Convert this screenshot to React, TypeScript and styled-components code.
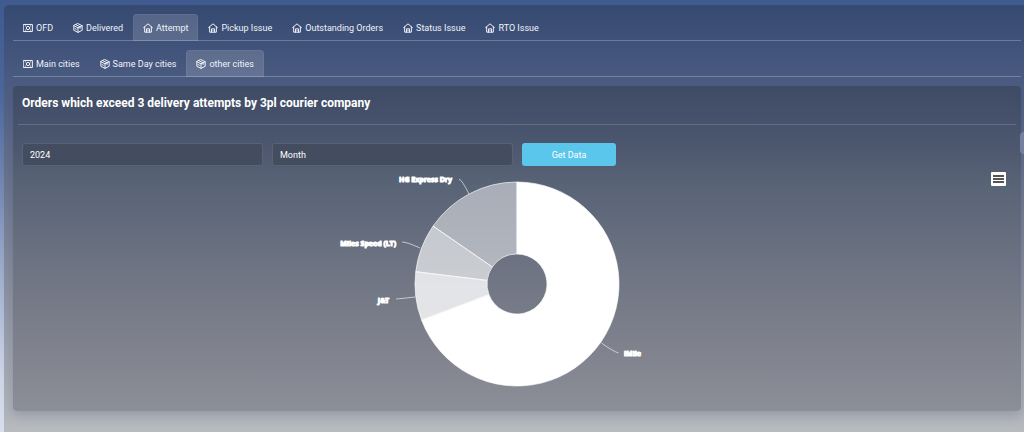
import React, { useState } from 'react';
import styled, { createGlobalStyle } from 'styled-components';

const GlobalStyle = createGlobalStyle`
  * { box-sizing: border-box; }
  html, body { margin: 0; }
  body {
    font-family: Roboto, "Liberation Sans", sans-serif;
    color: #fff;
    overflow-x: hidden;
  }
`;

const Page = styled.div`
  min-height: 100vh;
  display: flex;
  padding: 5px 0 0 4px;
  background: linear-gradient(180deg, #3f5a8f 0%, #4a659a 20%, #7186b1 42%, #a2b1d0 65%, #cfd7e8 88%, #d8deeb 100%);
`;

const Shell = styled.main`
  position: relative;
  flex: 1;
  min-width: 0;
  padding: 9px 3px 21px 9px;
  border-radius: 5px 0 0 0;
  background: linear-gradient(180deg, #364971 0%, #43557c 12%, #4e5e83 20%, #68738e 40%, #868d9f 62%, #a0a5b0 82%, #b0b4bb 95%, #b8bbbe 100%);
`;

const TabBar = styled.div`
  display: flex;
  height: 27px;
  margin-bottom: 9px;
  border-bottom: 1px solid rgba(255, 255, 255, 0.24);
`;

const Tab = styled.button<{ $active: boolean }>`
  display: flex;
  align-items: center;
  gap: 3px;
  height: 27px;
  padding: 0 9px;
  border: 1px solid ${(p) => (p.$active ? 'rgba(255, 255, 255, 0.06)' : 'transparent')};
  border-bottom: 0;
  border-radius: 4px 4px 0 0;
  background: ${(p) => (p.$active ? 'rgba(255, 255, 255, 0.15)' : 'transparent')};
  color: #f0f3f8;
  font: 400 9px/12px Roboto, "Liberation Sans", sans-serif;
  white-space: nowrap;
  cursor: pointer;
`;

const TabIcon = styled.svg`
  width: 10px;
  height: 10px;
  flex: none;
  fill: none;
  stroke: currentColor;
  stroke-width: 2.4;
  stroke-linejoin: round;
  stroke-linecap: round;
`;

const Card = styled.section`
  padding: 0 5px 3px;
  border-radius: 4px;
  background: linear-gradient(180deg, #3f4b65 0%, #4a556e 16%, #586376 30%, #6d7382 55%, #7f828d 80%, #8c8f97 100%);
  box-shadow: 0 4px 12px rgba(60, 70, 95, 0.25);
`;

const CardTitle = styled.h2`
  margin: 0;
  padding: 10px 4px 13px;
  border-bottom: 1px solid rgba(255, 255, 255, 0.16);
  font-size: 12px;
  line-height: 15px;
  font-weight: 700;
`;

const Filters = styled.form`
  display: flex;
  gap: 9px;
  padding: 18px 4px 0;
`;

const Field = styled.select`
  flex: 0 1 241px;
  min-width: 0;
  height: 23px;
  padding: 0 7px;
  appearance: none;
  border: 1px solid rgba(255, 255, 255, 0.12);
  border-radius: 3px;
  background: #434d5f;
  color: #fff;
  font: 400 9px/12px Roboto, "Liberation Sans", sans-serif;
`;

const SubmitButton = styled.button`
  flex: 0 1 94px;
  height: 23px;
  border: 0;
  border-radius: 3px;
  background: #5bc6ec;
  color: #fff;
  font: 400 9px/12px Roboto, "Liberation Sans", sans-serif;
  cursor: pointer;
`;

const ChartArea = styled.div`
  position: relative;
  display: flex;
  justify-content: center;
  padding-top: 4px;
`;

const Chart = styled.svg`
  display: block;
  width: 400px;
  height: 238px;
`;

const ChartLabel = styled.text`
  font: 700 7px "Noto Sans", "Open Sans", sans-serif;
  fill: #fff;
  stroke: #fff;
  stroke-width: 1;
  stroke-linejoin: round;
`;

const MenuButton = styled.button`
  position: absolute;
  top: 6px;
  right: 10px;
  display: flex;
  width: 15px;
  height: 14px;
  padding: 0;
  border: 0;
  border-radius: 1px;
  background: #fff;
  cursor: pointer;
`;

const SideHandle = styled.button`
  position: absolute;
  top: 127px;
  right: 0;
  width: 4px;
  height: 22px;
  padding: 0;
  border: 0;
  border-radius: 4px 0 0 4px;
  background: #7480a0;
`;

type IconName = 'cash' | 'box' | 'home';

function Icon({ name }: { name: IconName }) {
  return (
    <TabIcon viewBox="0 0 24 24" aria-hidden="true">
      {name === 'cash' && (
        <>
          <rect x="1.5" y="3.5" width="21" height="17" />
          <circle cx="12" cy="12" r="4" />
          <path d="M5.5 7h.5M18 7h.5M5.5 17h.5M18 17h.5" />
        </>
      )}
      {name === 'box' && (
        <>
          <path d="M12 1.500 22 6.500v11L12 22.500 2 17.500v-11z" />
          <path d="m2 6.500 10 5 10-5M12 11.500v11M7 4l10 5v4M5 13.500l3 1.500" />
        </>
      )}
      {name === 'home' && (
        <>
          <path d="M1.500 11 12 2l10.500 9" />
          <path d="M4 9.500V22h16V9.500" />
          <path d="M8.500 22v-8h7v8M12 17.500v.5" />
        </>
      )}
    </TabIcon>
  );
}

interface TabItem {
  label: string;
  icon: IconName;
}

const reportTabs: TabItem[] = [
  { label: 'OFD', icon: 'cash' },
  { label: 'Delivered', icon: 'box' },
  { label: 'Attempt', icon: 'home' },
  { label: 'Pickup Issue', icon: 'home' },
  { label: 'Outstanding Orders', icon: 'home' },
  { label: 'Status Issue', icon: 'home' },
  { label: 'RTO Issue', icon: 'home' },
];

const cityTabs: TabItem[] = [
  { label: 'Main cities', icon: 'cash' },
  { label: 'Same Day cities', icon: 'box' },
  { label: 'other cities', icon: 'box' },
];

function Tabs({ label, items, initial }: { label: string; items: TabItem[]; initial: number }) {
  const [active, setActive] = useState(initial);
  return (
    <TabBar role="tablist" aria-label={label}>
      {items.map((item, i) => (
        <Tab
          key={item.label}
          type="button"
          role="tab"
          aria-selected={i === active}
          $active={i === active}
          onClick={() => setActive(i)}
        >
          <Icon name={item.icon} />
          {item.label}
        </Tab>
      ))}
    </TabBar>
  );
}

const slices = [
  { name: 'iMile', value: 9, opacity: 1, x: 307, y: 186, anchor: 'start', link: 'M284.500 173q11 8 17 10' },
  { name: 'J&T', value: 1, opacity: 0.8, x: 72, y: 133, anchor: 'end', link: 'M98 127q-8 1-19 2' },
  { name: 'Miles Speed (LT)', value: 1, opacity: 0.63, x: 79, y: 76, anchor: 'end', link: 'M103 78q-13-6-18-6' },
  { name: 'HG Express Dry', value: 2, opacity: 0.48, x: 135, y: 12, anchor: 'end', link: 'M152 24q-7-14-10-15' },
] as const;

const CX = 200;
const CY = 114;
const OUTER = 102;
const INNER = 30;

function point(radius: number, turn: number) {
  const a = turn * 2 * Math.PI;
  return `${CX + radius * Math.sin(a)} ${CY - radius * Math.cos(a)}`;
}

function ring(from: number, to: number) {
  const large = to - from > 0.5 ? 1 : 0;
  return (
    `M${point(OUTER, from)} A${OUTER} ${OUTER} 0 ${large} 1 ${point(OUTER, to)} ` +
    `L${point(INNER, to)} A${INNER} ${INNER} 0 ${large} 0 ${point(INNER, from)}Z`
  );
}

function CourierChart() {
  const total = slices.reduce((sum, s) => sum + s.value, 0);
  let start = 0;
  return (
    <Chart viewBox="0 0 400 238" role="img" aria-label="Orders by courier company">
      {slices.map((s) => {
        const from = start / total;
        start += s.value;
        return (
          <g key={s.name}>
            <path
              d={ring(from, start / total)}
              fill="#fff"
              fillOpacity={s.opacity}
              stroke="#fff"
              strokeOpacity={0.65}
            />
            <path d={s.link} fill="none" stroke="#fff" strokeOpacity={0.6} />
            <ChartLabel x={s.x} y={s.y} textAnchor={s.anchor}>
              {s.name}
            </ChartLabel>
          </g>
        );
      })}
    </Chart>
  );
}

export default function App() {
  return (
    <>
      <GlobalStyle />
      <Page>
        <Shell>
          <Tabs label="Reports" items={reportTabs} initial={2} />
          <Tabs label="Cities" items={cityTabs} initial={2} />
          <Card>
            <CardTitle>Orders which exceed 3 delivery attempts by 3pl courier company</CardTitle>
            <Filters onSubmit={(e) => e.preventDefault()}>
              <Field aria-label="Year" defaultValue="2024">
                <option>2024</option>
              </Field>
              <Field aria-label="Month" defaultValue="Month">
                <option>Month</option>
              </Field>
              <SubmitButton type="submit">Get Data</SubmitButton>
            </Filters>
            <ChartArea>
              <CourierChart />
              <MenuButton type="button" aria-label="Chart menu">
                <svg width="15" height="14" viewBox="0 0 15 14" aria-hidden="true">
                  <path d="M2 4h11M2 7h11M2 10h11" stroke="#555" strokeWidth="2" />
                </svg>
              </MenuButton>
            </ChartArea>
          </Card>
          <SideHandle type="button" aria-label="Open side panel" />
        </Shell>
      </Page>
    </>
  );
}
